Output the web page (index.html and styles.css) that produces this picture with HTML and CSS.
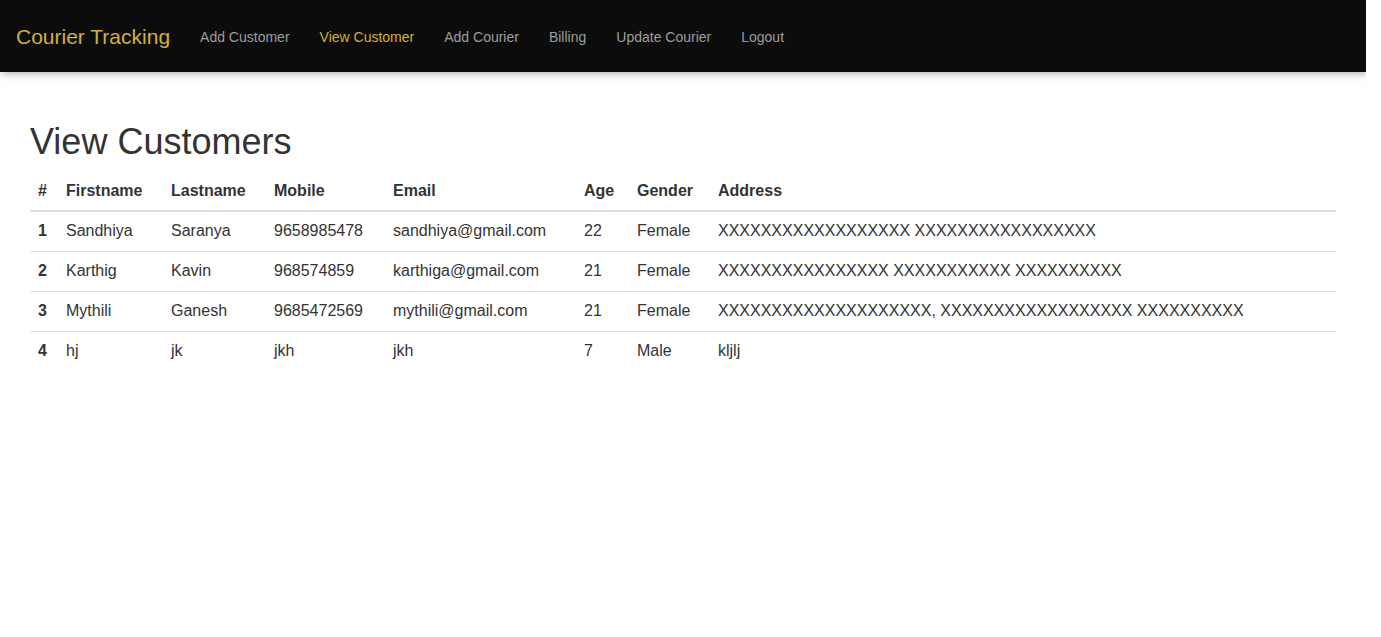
FILE: index.html
```html
<!DOCTYPE html>
<html>
<head>
<meta charset="utf-8">
<title>View Customers</title>
<link rel="stylesheet" href="styles.css">
</head>
<body>
<nav class="navbar">
  <a class="brand" href="#">Courier Tracking</a>
  <ul class="nav">
    <li><a href="#">Add Customer</a></li>
    <li><a class="active" href="#">View Customer</a></li>
    <li><a href="#">Add Courier</a></li>
    <li><a href="#">Billing</a></li>
    <li><a href="#">Update Courier</a></li>
    <li><a href="#">Logout</a></li>
  </ul>
</nav>
<main class="content">
  <h1 class="title">View Customers</h1>
  <table class="table">
    <thead>
      <tr>
        <th class="c-num">#</th>
        <th class="c-first">Firstname</th>
        <th class="c-last">Lastname</th>
        <th class="c-mobile">Mobile</th>
        <th class="c-email">Email</th>
        <th class="c-age">Age</th>
        <th class="c-gender">Gender</th>
        <th>Address</th>
      </tr>
    </thead>
    <tbody>
      <tr><th>1</th><td>Sandhiya</td><td>Saranya</td><td>9658985478</td><td>sandhiya@gmail.com</td><td>22</td><td>Female</td><td>XXXXXXXXXXXXXXXXXX XXXXXXXXXXXXXXXXX</td></tr>
      <tr><th>2</th><td>Karthig</td><td>Kavin</td><td>968574859</td><td>karthiga@gmail.com</td><td>21</td><td>Female</td><td>XXXXXXXXXXXXXXXX XXXXXXXXXXX XXXXXXXXXX</td></tr>
      <tr><th>3</th><td>Mythili</td><td>Ganesh</td><td>9685472569</td><td>mythili@gmail.com</td><td>21</td><td>Female</td><td>XXXXXXXXXXXXXXXXXXXX, XXXXXXXXXXXXXXXXXX XXXXXXXXXX</td></tr>
      <tr><th>4</th><td>hj</td><td>jk</td><td>jkh</td><td>jkh</td><td>7</td><td>Male</td><td>kljlj</td></tr>
    </tbody>
  </table>
</main>
</body>
</html>
```
FILE: styles.css
```css
html, body {
  margin: 0;
  padding: 0;
  background: #fff;
}
body {
  font-family: "Liberation Sans", Arial, sans-serif;
  color: #333;
  width: 1366px;
}
.navbar {
  display: flex;
  align-items: center;
  box-sizing: border-box;
  height: 72px;
  padding-top: 2px;
  background: #0c0c0c;
  box-shadow: 2px 2px 8px rgba(0, 0, 0, 0.3);
}
.brand {
  padding: 0 15px 0 16px;
  font-size: 21px;
  color: #d2b03c;
  text-decoration: none;
  line-height: 24px;
}
.nav {
  display: flex;
  list-style: none;
  margin: 0;
  padding: 0;
}
.nav a {
  display: block;
  padding: 0 15px;
  font-size: 14px;
  line-height: 20px;
  color: #9d9d9d;
  text-decoration: none;
}
.nav a.active {
  color: #d2b03c;
}
.content {
  padding: 30px 30px 0 30px;
}
.title {
  margin: 20px 0 10px;
  font-size: 36px;
  font-weight: 400;
  line-height: 1.1;
  color: #333;
}
.table {
  width: 100%;
  border-collapse: collapse;
  font-size: 16px;
  line-height: 1.42857;
}
.table th, .table td {
  padding: 8px;
  text-align: left;
  vertical-align: top;
}
.table thead th {
  border-bottom: 2px solid #ddd;
}
.table tbody tr + tr th, .table tbody tr + tr td {
  border-top: 1px solid #ddd;
}
.table tbody td {
  font-weight: 400;
}
.c-num { width: 12px; }
.c-first { width: 89px; }
.c-last { width: 87px; }
.c-mobile { width: 103px; }
.c-email { width: 175px; }
.c-age { width: 37px; }
.c-gender { width: 65px; }
```
